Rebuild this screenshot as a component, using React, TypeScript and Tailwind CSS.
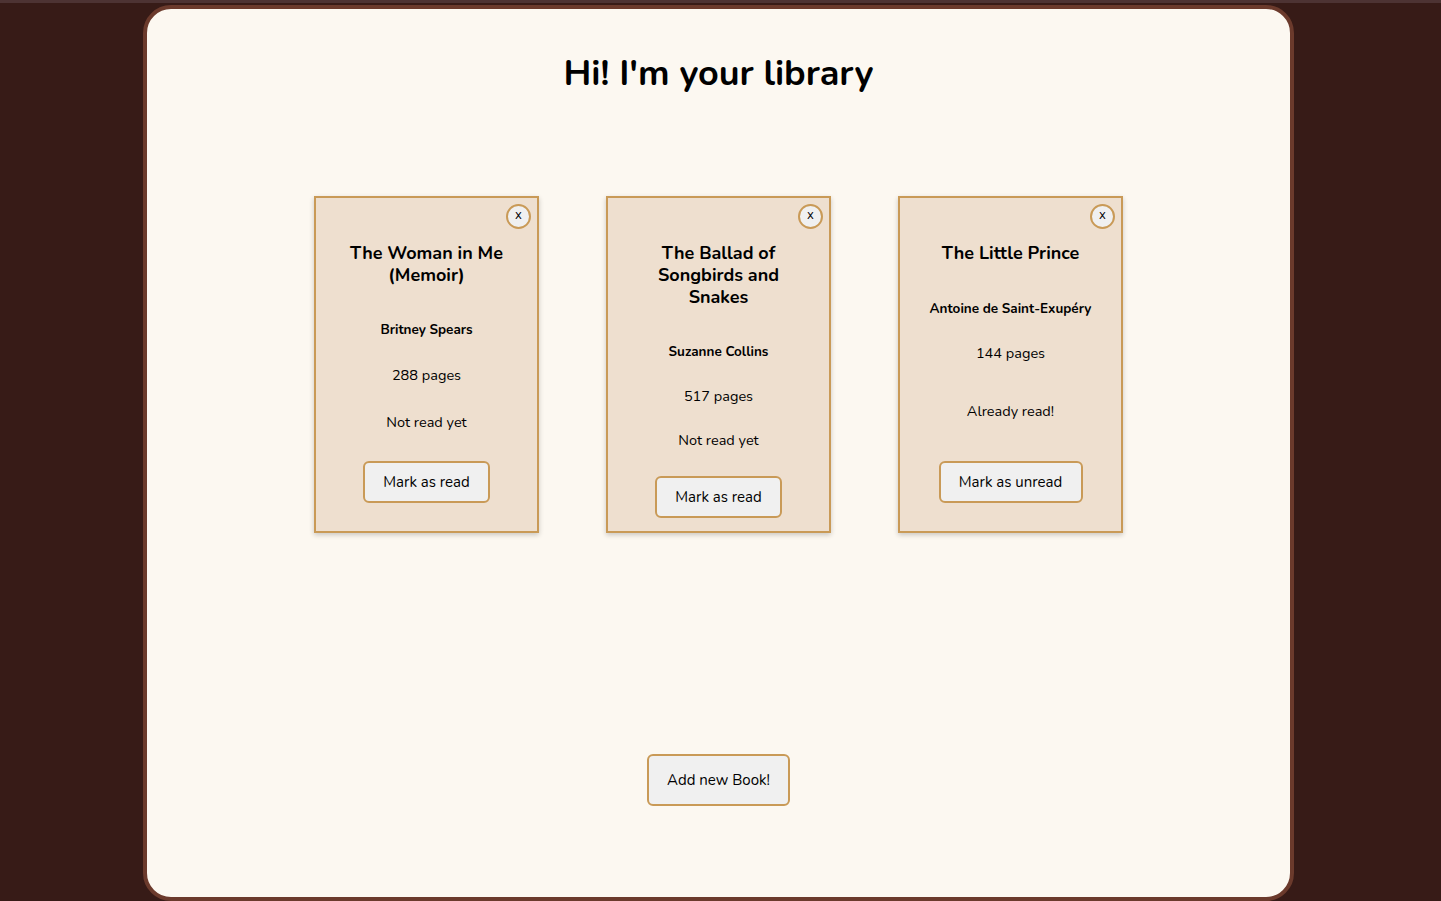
import React from 'react';

type Book = {
  title: string;
  author: string;
  pages: number;
  read: boolean;
  titleCls: string;
  authorCls: string;
  pagesCls: string;
  statusCls: string;
  buttonCls: string;
};

const books: Book[] = [
  {
    title: 'The Woman in Me (Memoir)',
    author: 'Britney Spears',
    pages: 288,
    read: false,
    titleCls: 'mt-[44px] w-[170px]',
    authorCls: 'mt-[34px]',
    pagesCls: 'mt-[25px]',
    statusCls: 'mt-[27px]',
    buttonCls: 'mt-[29px] w-[127px]',
  },
  {
    title: 'The Ballad of Songbirds and Snakes',
    author: 'Suzanne Collins',
    pages: 517,
    read: false,
    titleCls: 'mt-[44px] w-[140px]',
    authorCls: 'mt-[34px]',
    pagesCls: 'mt-[24px]',
    statusCls: 'mt-[24px]',
    buttonCls: 'mt-[26px] w-[127px]',
  },
  {
    title: 'The Little Prince',
    author: 'Antoine de Saint-Exupéry',
    pages: 144,
    read: true,
    titleCls: 'mt-[44px] w-[170px]',
    authorCls: 'mt-[35px]',
    pagesCls: 'mt-[24px]',
    statusCls: 'mt-[38px]',
    buttonCls: 'mt-[40px] w-[144px]',
  },
];

const BookCard = ({ book }: { book: Book }) => (
  <div className="relative flex h-[337px] w-[225px] flex-col items-center border-2 border-[#c99a57] bg-[#eedfcf] text-center text-black shadow-[0_2px_5px_rgba(0,0,0,0.2)]">
    <button className="absolute right-[6px] top-[6px] flex h-[25px] w-[25px] items-center justify-center rounded-full border-2 border-[#c99a57] bg-[#f0f0f0] pb-[2px] text-[13px] leading-none">
      x
    </button>
    <h2 className={`${book.titleCls} text-[18px] font-bold leading-[22px]`}>{book.title}</h2>
    <p className={`${book.authorCls} text-[13.5px] font-bold leading-[20px]`}>{book.author}</p>
    <p className={`${book.pagesCls} text-[14.5px] leading-[20px]`}>{book.pages} pages</p>
    <p className={`${book.statusCls} text-[14.5px] leading-[20px]`}>{book.read ? 'Already read!' : 'Not read yet'}</p>
    <button className={`${book.buttonCls} h-[42px] rounded-md border-2 border-[#c99a57] bg-[#f0f0f0] text-[15px]`}>
      {book.read ? 'Mark as unread' : 'Mark as read'}
    </button>
  </div>
);

export default function App() {
  return (
    <div className="min-h-[901px] bg-[#371b17] font-['Nunito','Open_Sans',sans-serif]">
      <div className="h-[3px] bg-[#4d3333]" />
      <div className="ml-[143px] mt-[2px] flex h-[896px] w-[1151px] flex-col items-center rounded-[28px] border-4 border-[#6b3a2c] bg-[#fcf8f1]">
        <h1 className="mt-[40px] text-[36px] font-bold leading-[50px] text-black">Hi! I'm your library</h1>
        <div className="mt-[97px] flex gap-[67px]">
          {books.map((b) => (
            <BookCard key={b.title} book={b} />
          ))}
        </div>
        <button className="mt-[221px] h-[52px] w-[143px] rounded-md border-2 border-[#c99a57] bg-[#f0f0f0] text-[15px] text-black">
          Add new Book!
        </button>
      </div>
    </div>
  );
}
